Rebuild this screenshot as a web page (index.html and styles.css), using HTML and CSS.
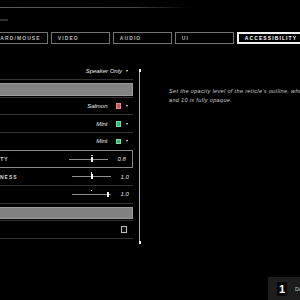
FILE: index.html
```html
<!DOCTYPE html>
<html>
<head>
<meta charset="utf-8">
<link rel="stylesheet" href="styles.css">
</head>
<body>
<div class="page">
  <div class="topline"></div>
  <div class="back"></div>
  <nav class="tabs">
    <div class="tab">KEYBOARD/MOUSE</div>
    <div class="tab">VIDEO</div>
    <div class="tab">AUDIO</div>
    <div class="tab">UI</div>
    <div class="tab active">ACCESSIBILITY</div>
  </nav>
  <div class="main">
    <div class="list">
      <div class="row">
        <span class="label">VOICE CHAT</span>
        <span class="val">Speaker Only</span><span class="caret"></span>
      </div>
      <div class="row bar-row"><div class="bar"></div></div>
      <div class="row">
        <span class="label">ENEMY COLOR</span>
        <span class="val">Salmon</span><span class="swatch salmon"></span><span class="caret"></span>
      </div>
      <div class="row">
        <span class="label">ALLY COLOR</span>
        <span class="val">Mint</span><span class="swatch mint"></span><span class="caret"></span>
      </div>
      <div class="row">
        <span class="label">RETICLE COLOR</span>
        <span class="val">Mint</span><span class="swatch mint"></span><span class="caret"></span>
      </div>
      <div class="row sel">
        <span class="label">CROSSHAIR OUTLINE OPACITY</span>
        <div class="slider"><span class="mark" style="left:58%"></span><span class="thumb" style="left:58%"></span></div>
        <span class="num">0.8</span>
      </div>
      <div class="row">
        <span class="label">CROSSHAIR OUTLINE THICKNESS</span>
        <div class="slider"><span class="mark" style="left:49%"></span><span class="thumb" style="left:49%"></span></div>
        <span class="num">1.0</span>
      </div>
      <div class="row">
        <span class="label">RETICLE SIZE</span>
        <div class="slider"><span class="mark" style="left:49%"></span><span class="thumb" style="left:92%"></span></div>
        <span class="num">1.0</span>
      </div>
      <div class="row bar-row"><div class="bar"></div></div>
      <div class="row">
        <span class="label">HIGH CONTRAST</span>
        <span class="check"></span>
      </div>
    </div>
    <div class="scroll"><span class="dot"></span><span class="track"></span><span class="dot"></span></div>
    <p class="desc">Set the opacity level of the reticle's outline, where 0 is fully transparent<br>and 10 is fully opaque.</p>
  </div>
  <div class="hint"><span class="key">1</span><span class="hint-text">Default</span></div>
</div>
</body>
</html>
```
FILE: styles.css
```css
* { box-sizing: border-box; }
html, body { margin: 0; padding: 0; background: #000; }
body { width: 300px; height: 300px; overflow: hidden; font-family: "Liberation Sans", Arial, sans-serif; }
.page { width: 300px; height: 300px; display: flex; flex-direction: column; }
.topline { margin-top: 7px; height: 1px; width: 190px; background: linear-gradient(to right, #5a5a5a, #484848 70%, rgba(40,40,40,0)); flex: none; }
.back { margin-top: 11px; width: 8px; height: 2px; background: #333; flex: none; }
.tabs { display: flex; gap: 3px; margin-top: 11px; margin-left: -30px; flex: none; }
.tab { height: 12px; min-width: 59px; padding: 0 6px; border: 1px solid #747474; color: #bcbcbc; font-size: 5px; font-weight: bold; letter-spacing: 1.1px; line-height: 10px; white-space: nowrap; flex: none; }
.tab.active { border: 2px solid #f0f0f0; color: #fff; line-height: 8px; }
.main { display: flex; margin-top: 18.5px; flex: none; }
.list { margin-left: -103px; width: 236px; flex: none; }
.row { height: 17.67px; display: flex; align-items: center; border-bottom: 1px solid #333; padding: 0 5px 0 10px; }
.row + .sel { margin-top: -1px; height: 18.67px; border: 1px solid #8a8a8a; padding: 0 7px 0 9px; }
.label { font-size: 5px; font-weight: bold; letter-spacing: 1px; color: #d8d8d8; white-space: nowrap; margin-right: auto; }
.val { font-size: 6px; font-style: italic; color: #ececec; white-space: nowrap; }
.caret { width: 0; height: 0; border-left: 1.5px solid transparent; border-right: 1.5px solid transparent; border-top: 2.5px solid #f0f0f0; margin-left: 4px; }
.swatch { width: 5.5px; height: 5.5px; margin-left: 8px; border: 1px solid; }
.swatch + .caret { margin-left: 5px; }
.salmon { background: #c9525c; border-color: #e68a90; }
.mint { background: #2fb874; border-color: #80dcae; }
.bar-row { padding: 3px 0 1px 0; align-items: stretch; }
.bar { flex: 1; background: #828282; border: 1px solid #9e9e9e; }
.slider { position: relative; width: 39px; height: 1px; background: #8e8e8e; }
.thumb { position: absolute; top: -2px; width: 2px; height: 5px; background: #f6f6f6; }
.mark { position: absolute; top: -4px; width: 1.5px; height: 1.5px; background: #e0e0e0; }
.num { font-size: 6px; font-style: italic; color: #e2e2e2; margin-left: 10px; width: 7.5px; }
.check { width: 6px; height: 7px; border: 1px solid #bcbcbc; background: #111; margin-right: 1px; box-shadow: 0 0 2px rgba(255,255,255,0.15); }
.scroll { margin-left: 5px; margin-top: 6px; height: 175px; width: 3px; display: flex; flex-direction: column; align-items: center; flex: none; }
.dot { width: 2px; height: 3px; background: #f0f0f0; flex: none; }
.track { flex: 1; width: 1px; background: #a8a8a8; }
.desc { margin: 24px 0 0 28px; font-size: 5.5px; font-style: italic; line-height: 9px; letter-spacing: 0.35px; color: #cccccc; white-space: nowrap; flex: none; }
.hint { margin-top: auto; align-self: flex-end; margin-right: -40px; width: 72px; height: 23px; background: #1d1d1d; display: flex; align-items: center; padding-left: 9px; gap: 8px; }
.key { width: 10px; height: 14px; background: #050505; color: #fff; font-weight: bold; font-size: 11px; line-height: 14px; text-align: center; }
.hint-text { font-size: 5.5px; color: #c4c4c4; }
```
